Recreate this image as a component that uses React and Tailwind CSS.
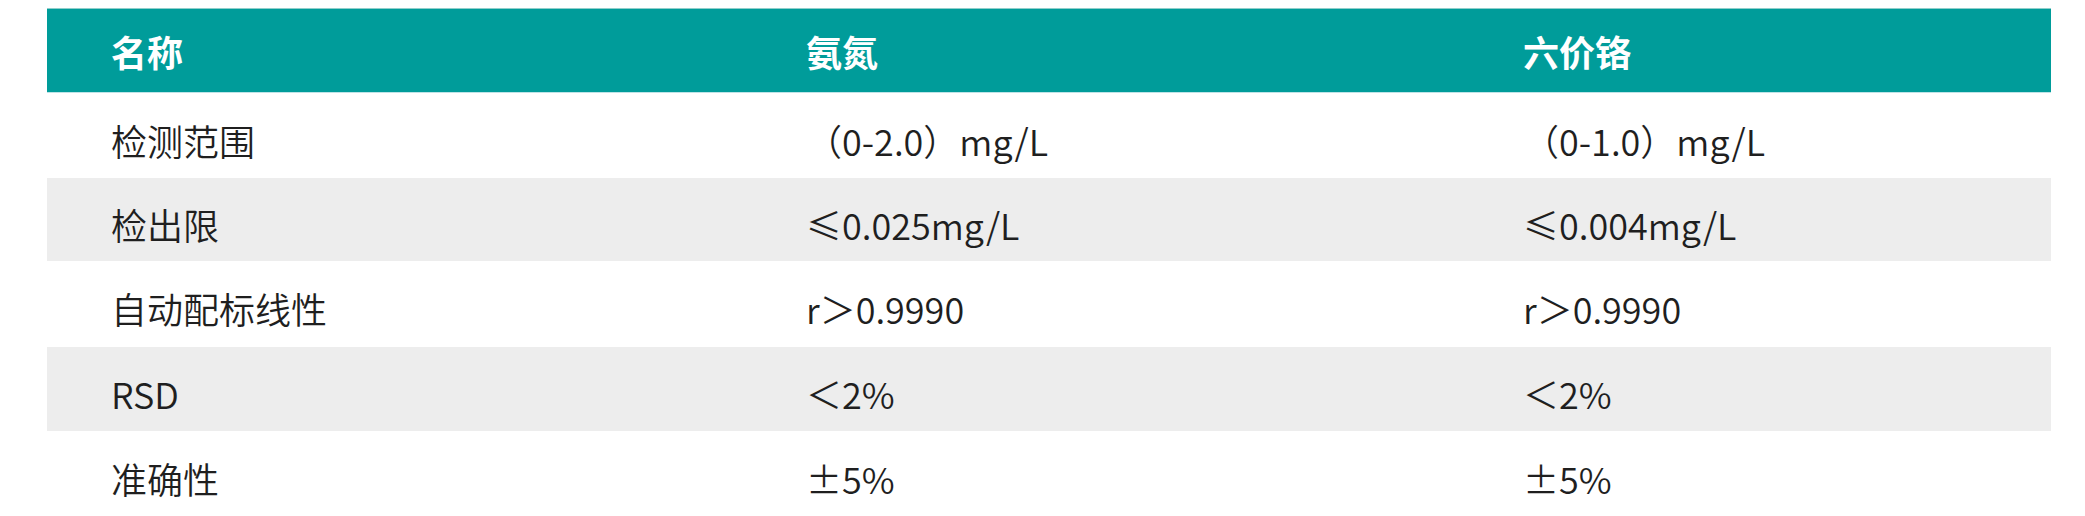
const rows = [
  { name: '检测范围', a: '（0-2.0）mg/L', b: '（0-1.0）mg/L', h: 'h-[85px]', bg: 'bg-white' },
  { name: '检出限', a: '≤0.025mg/L', b: '≤0.004mg/L', h: 'h-[83px]', bg: 'bg-[#ededed]' },
  { name: '自动配标线性', a: 'r＞0.9990', b: 'r＞0.9990', h: 'h-[86px]', bg: 'bg-white' },
  { name: 'RSD', a: '＜2%', b: '＜2%', h: 'h-[84px]', bg: 'bg-[#ededed]' },
  { name: '准确性', a: '±5%', b: '±5%', h: 'h-[85px]', bg: 'bg-white' },
];

export default function App() {
  return (
    <div
      className="w-[2085px] h-[516px] overflow-hidden bg-white pt-2 pl-[47px]"
      style={{ fontFamily: '"Noto Sans CJK SC", "Noto Sans", sans-serif' }}
    >
      <div className="w-[2004px]">
        <div className="grid grid-cols-[759px_717px_1fr] h-[85px] items-center bg-[#009c9a] border-t border-b border-t-[#8fcfcb] border-b-[#bfe3e6] text-white font-bold text-[36px] leading-none">
          <div className="pl-16">名称</div>
          <div>氨氮</div>
          <div>六价铬</div>
        </div>
        {rows.map((r) => (
          <div
            key={r.name}
            className={`grid grid-cols-[759px_717px_1fr] items-center pt-2 text-[#1f1f1f] text-[36px] font-[350] leading-none ${r.h} ${r.bg}`}
          >
            <div className="pl-16">{r.name}</div>
            <div>{r.a}</div>
            <div>{r.b}</div>
          </div>
        ))}
      </div>
    </div>
  );
}
